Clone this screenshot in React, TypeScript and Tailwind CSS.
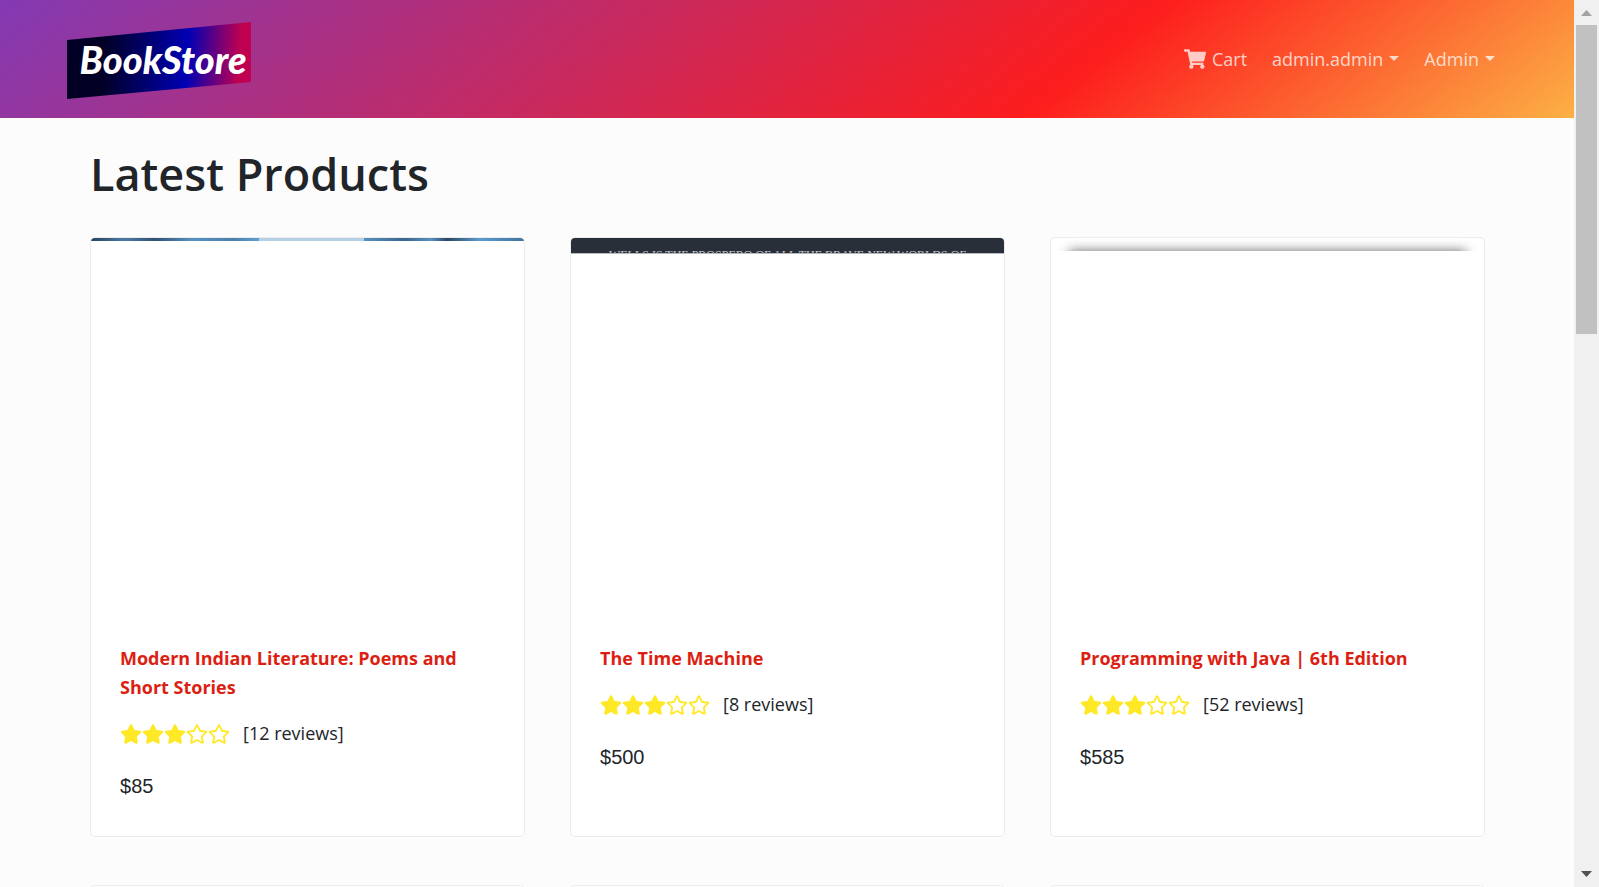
import { FaShoppingCart, FaStar, FaRegStar } from "react-icons/fa";

type Product = {
  title: string;
  reviews: number;
  price: number;
  cover: "blue" | "slate" | "shadow";
};

const products: Product[] = [
  { title: "Modern Indian Literature: Poems and Short Stories", reviews: 12, price: 85, cover: "blue" },
  { title: "The Time Machine", reviews: 8, price: 500, cover: "slate" },
  { title: "Programming with Java | 6th Edition", reviews: 52, price: 585, cover: "shadow" },
];

function Logo() {
  return (
    <a
      href="#home"
      className="flex h-[77px] w-[184px] items-center justify-center bg-[linear-gradient(93deg,#020024_20%,#0000b4_65%,#c00050_93%)] pb-1 pl-2 font-['Lato',sans-serif] text-[38px] leading-[40px] font-black text-white italic [clip-path:polygon(0_18px,100%_0,100%_60px,0_100%)]"
    >
      BookStore
    </a>
  );
}

function Cover({ kind }: { kind: Product["cover"] }) {
  if (kind === "blue") {
    return (
      <div className="flex h-[3px]">
        <div className="flex-[168] bg-[linear-gradient(90deg,#28435c,#4a7ba6_20%,#2f5273_38%,#5591c2_60%,#4a80ad_85%,#5f9fd0)]" />
        <div className="flex-[105] bg-[#b4d0e2]" />
        <div className="flex-[160] bg-[linear-gradient(90deg,#5591c2,#3b668d_25%,#5591c2_42%,#2a4866_52%,#5b9bcf_72%,#3f739f)]" />
      </div>
    );
  }
  if (kind === "slate") {
    return (
      <div className="h-4 overflow-hidden border-b border-[#b6bac0] bg-[#282f38] pt-[11px] text-center font-['Liberation_Serif',serif] text-[12px] leading-[12px] whitespace-nowrap text-[#c4c7cb]">
        WELLS IS THE PROSPERO OF ALL THE BRAVE NEW WORLDS OF
      </div>
    );
  }
  return (
    <div className="h-[13px] overflow-hidden px-[18px] pt-[13px]">
      <div className="h-8 shadow-[0_0_12px_0_#666]" />
    </div>
  );
}

function Card({ product }: { product: Product }) {
  return (
    <article className="h-[600px] overflow-hidden rounded-[5px] border border-[#ececec] bg-white">
      <div className="h-[390px]">
        <Cover kind={product.cover} />
      </div>
      <div className="px-[29px] pt-4">
        <a href="#product" className="block text-[18px] leading-[29px] font-bold text-[#dc1f12]">
          {product.title}
        </a>
        <div className="mt-[17px] flex items-center leading-[29px]">
          <div className="flex text-[22px] text-[#ffe825]" role="img" aria-label="3 out of 5 stars">
            {[1, 2, 3, 4, 5].map((n) => (n <= 3 ? <FaStar key={n} /> : <FaRegStar key={n} />))}
          </div>
          <span className="ml-[13px] text-[18px]">[{product.reviews} reviews]</span>
        </div>
        <p className="mt-[23px] font-['Liberation_Sans',sans-serif] text-[20px] leading-[30px]">${product.price}</p>
      </div>
    </article>
  );
}

function Caret() {
  return (
    <svg viewBox="0 0 10 5" className="h-[5px] w-[10px]" fill="currentColor" aria-hidden="true">
      <path d="M0 0H10L5 5Z" />
    </svg>
  );
}

function Scrollbar() {
  return (
    <div className="flex w-[25px] shrink-0 flex-col items-center bg-[#f0f0f0]" aria-hidden="true">
      <svg viewBox="0 0 25 25" className="h-[25px] w-[25px]" fill="#a3a3a3">
        <path d="M7 16H18L12.500 10Z" />
      </svg>
      <div className="h-[309px] w-[21px] bg-[#c1c1c1]" />
      <svg viewBox="0 0 25 25" className="mt-auto h-[25px] w-[25px]" fill="#505050">
        <path d="M7 9H18L12.500 15Z" />
      </svg>
    </div>
  );
}

export default function App() {
  return (
    <div className="flex h-screen overflow-hidden bg-[#fcfcfc] font-['Open_Sans','Noto_Sans',sans-serif] text-[#212529]">
      <div className="min-w-0 flex-1 overflow-hidden">
        <header className="flex items-center justify-between bg-[linear-gradient(141deg,#833ab4_0%,#fd1d1d_68%,#fcb045_100%)] pt-[22px] pr-[79px] pb-[19px] pl-[67px]">
          <Logo />
          <nav className="flex items-center gap-[25px] pb-1 text-[18px] leading-[30px] text-white/75">
            <a href="#cart" className="flex items-center gap-[6px]">
              <FaShoppingCart className="text-[22px]" />
              Cart
            </a>
            <button type="button" className="flex items-center gap-[6px]">
              admin.admin
              <Caret />
            </button>
            <button type="button" className="flex items-center gap-[6px]">
              Admin
              <Caret />
            </button>
          </nav>
        </header>
        <main className="pr-[89px] pl-[90px]">
          <h1 className="pt-[26px] pb-[33px] text-[45px] leading-[60px] font-semibold">Latest Products</h1>
          <div className="grid grid-cols-3 gap-x-[45px] gap-y-12">
            {products.map((p) => (
              <Card key={p.title} product={p} />
            ))}
            {products.map((p) => (
              <div key={p.title} className="h-[600px] rounded-[5px] border border-[#ececec] bg-white" />
            ))}
          </div>
        </main>
      </div>
      <Scrollbar />
    </div>
  );
}
